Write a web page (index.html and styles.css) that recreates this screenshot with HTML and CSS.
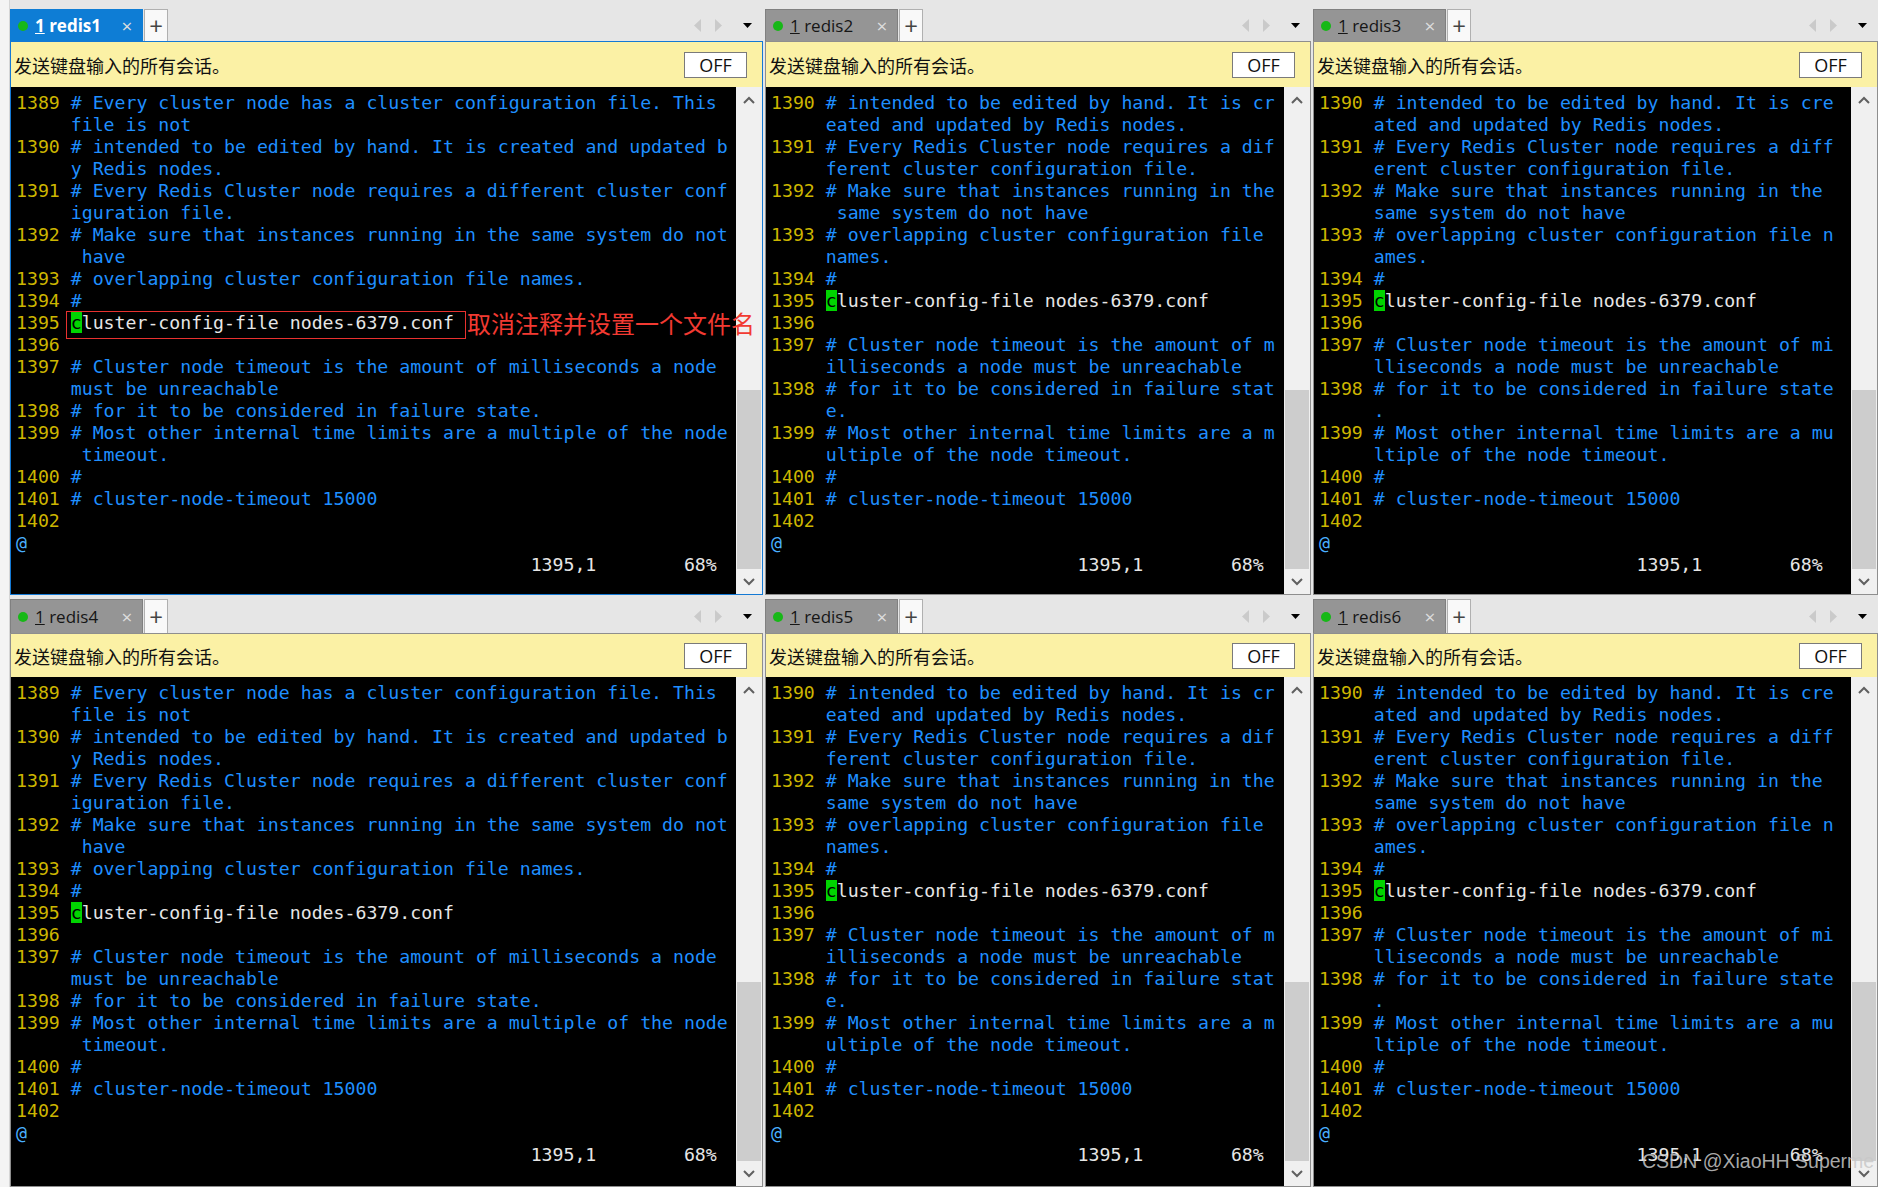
FILE: index.html
```
<!DOCTYPE html>
<html lang="zh-CN">
<head>
    <meta charset="UTF-8">
    <title>Xshell - redis</title>
    <link rel="stylesheet" href="styles.css">
</head>
<body>
<div class="screen">
    <div class="edge"></div>
    <div class="panes">

        <!-- redis1 (active) -->
        <div class="pane active">
            <div class="tabbar">
                <div class="tab"><span class="dot"></span><span class="tab-name"><u>1</u> redis1</span><span class="close">×</span></div>
                <div class="add">+</div>
                <div class="tab-nav">
                    <svg width="7" height="13" viewBox="0 0 7 13"><path d="M7 0 L0 6.5 L7 13 Z" fill="#cacaca"/></svg>
                    <svg width="7" height="13" viewBox="0 0 7 13"><path d="M0 0 L7 6.5 L0 13 Z" fill="#cacaca"/></svg>
                    <svg class="menu" width="9" height="5" viewBox="0 0 9 5"><path d="M0 0 L9 0 L4.5 5 Z" fill="#000"/></svg>
                </div>
            </div>
            <div class="frame">
                <div class="sendbar"><span>发送键盘输入的所有会话。</span><span class="off">OFF</span></div>
                <div class="term">
<pre class="lines"><span class="n">1389</span> # Every cluster node has a cluster configuration file. This
     file is not
<span class="n">1390</span> # intended to be edited by hand. It is created and updated b
     y Redis nodes.
<span class="n">1391</span> # Every Redis Cluster node requires a different cluster conf
     iguration file.
<span class="n">1392</span> # Make sure that instances running in the same system do not
      have
<span class="n">1393</span> # overlapping cluster configuration file names.
<span class="n">1394</span> #
<span class="n">1395</span> <span class="w"><span class="cur">c</span>luster-config-file nodes-6379.conf</span>
<span class="n">1396</span>
<span class="n">1397</span> # Cluster node timeout is the amount of milliseconds a node
     must be unreachable
<span class="n">1398</span> # for it to be considered in failure state.
<span class="n">1399</span> # Most other internal time limits are a multiple of the node
      timeout.
<span class="n">1400</span> #
<span class="n">1401</span> # cluster-node-timeout 15000
<span class="n">1402</span>
<span class="at">@</span>
<span class="st ruler-65">1395,1        68%</span></pre>
                    <div class="scroll">
                        <div class="arrow"><svg width="12" height="8" viewBox="0 0 12 8"><path d="M1 7 L6 2 L11 7" fill="none" stroke="#606060" stroke-width="2"/></svg></div>
                        <div class="track"></div>
                        <div class="thumb"></div>
                        <div class="arrow"><svg width="12" height="8" viewBox="0 0 12 8"><path d="M1 1 L6 6 L11 1" fill="none" stroke="#606060" stroke-width="2"/></svg></div>
                    </div>
                    <div class="note-box"></div>
                    <div class="note">取消注释并设置一个文件名</div>
                </div>
            </div>
        </div>

        <!-- redis2 -->
        <div class="pane">
            <div class="tabbar">
                <div class="tab"><span class="dot"></span><span class="tab-name"><u>1</u> redis2</span><span class="close">×</span></div>
                <div class="add">+</div>
                <div class="tab-nav">
                    <svg width="7" height="13" viewBox="0 0 7 13"><path d="M7 0 L0 6.5 L7 13 Z" fill="#cacaca"/></svg>
                    <svg width="7" height="13" viewBox="0 0 7 13"><path d="M0 0 L7 6.5 L0 13 Z" fill="#cacaca"/></svg>
                    <svg class="menu" width="9" height="5" viewBox="0 0 9 5"><path d="M0 0 L9 0 L4.5 5 Z" fill="#000"/></svg>
                </div>
            </div>
            <div class="frame">
                <div class="sendbar"><span>发送键盘输入的所有会话。</span><span class="off">OFF</span></div>
                <div class="term">
<pre class="lines"><span class="n">1390</span> # intended to be edited by hand. It is cr
     eated and updated by Redis nodes.
<span class="n">1391</span> # Every Redis Cluster node requires a dif
     ferent cluster configuration file.
<span class="n">1392</span> # Make sure that instances running in the
      same system do not have
<span class="n">1393</span> # overlapping cluster configuration file
     names.
<span class="n">1394</span> #
<span class="n">1395</span> <span class="w"><span class="cur">c</span>luster-config-file nodes-6379.conf</span>
<span class="n">1396</span>
<span class="n">1397</span> # Cluster node timeout is the amount of m
     illiseconds a node must be unreachable
<span class="n">1398</span> # for it to be considered in failure stat
     e.
<span class="n">1399</span> # Most other internal time limits are a m
     ultiple of the node timeout.
<span class="n">1400</span> #
<span class="n">1401</span> # cluster-node-timeout 15000
<span class="n">1402</span>
<span class="at">@</span>
<span class="st ruler-46">1395,1        68%</span></pre>
                    <div class="scroll">
                        <div class="arrow"><svg width="12" height="8" viewBox="0 0 12 8"><path d="M1 7 L6 2 L11 7" fill="none" stroke="#606060" stroke-width="2"/></svg></div>
                        <div class="track"></div>
                        <div class="thumb"></div>
                        <div class="arrow"><svg width="12" height="8" viewBox="0 0 12 8"><path d="M1 1 L6 6 L11 1" fill="none" stroke="#606060" stroke-width="2"/></svg></div>
                    </div>
                </div>
            </div>
        </div>

        <!-- redis3 -->
        <div class="pane">
            <div class="tabbar">
                <div class="tab"><span class="dot"></span><span class="tab-name"><u>1</u> redis3</span><span class="close">×</span></div>
                <div class="add">+</div>
                <div class="tab-nav">
                    <svg width="7" height="13" viewBox="0 0 7 13"><path d="M7 0 L0 6.5 L7 13 Z" fill="#cacaca"/></svg>
                    <svg width="7" height="13" viewBox="0 0 7 13"><path d="M0 0 L7 6.5 L0 13 Z" fill="#cacaca"/></svg>
                    <svg class="menu" width="9" height="5" viewBox="0 0 9 5"><path d="M0 0 L9 0 L4.5 5 Z" fill="#000"/></svg>
                </div>
            </div>
            <div class="frame">
                <div class="sendbar"><span>发送键盘输入的所有会话。</span><span class="off">OFF</span></div>
                <div class="term">
<pre class="lines"><span class="n">1390</span> # intended to be edited by hand. It is cre
     ated and updated by Redis nodes.
<span class="n">1391</span> # Every Redis Cluster node requires a diff
     erent cluster configuration file.
<span class="n">1392</span> # Make sure that instances running in the
     same system do not have
<span class="n">1393</span> # overlapping cluster configuration file n
     ames.
<span class="n">1394</span> #
<span class="n">1395</span> <span class="w"><span class="cur">c</span>luster-config-file nodes-6379.conf</span>
<span class="n">1396</span>
<span class="n">1397</span> # Cluster node timeout is the amount of mi
     lliseconds a node must be unreachable
<span class="n">1398</span> # for it to be considered in failure state
     .
<span class="n">1399</span> # Most other internal time limits are a mu
     ltiple of the node timeout.
<span class="n">1400</span> #
<span class="n">1401</span> # cluster-node-timeout 15000
<span class="n">1402</span>
<span class="at">@</span>
<span class="st ruler-47">1395,1        68%</span></pre>
                    <div class="scroll">
                        <div class="arrow"><svg width="12" height="8" viewBox="0 0 12 8"><path d="M1 7 L6 2 L11 7" fill="none" stroke="#606060" stroke-width="2"/></svg></div>
                        <div class="track"></div>
                        <div class="thumb"></div>
                        <div class="arrow"><svg width="12" height="8" viewBox="0 0 12 8"><path d="M1 1 L6 6 L11 1" fill="none" stroke="#606060" stroke-width="2"/></svg></div>
                    </div>
                </div>
            </div>
        </div>

        <!-- redis4 -->
        <div class="pane lower">
            <div class="tabbar">
                <div class="tab"><span class="dot"></span><span class="tab-name"><u>1</u> redis4</span><span class="close">×</span></div>
                <div class="add">+</div>
                <div class="tab-nav">
                    <svg width="7" height="13" viewBox="0 0 7 13"><path d="M7 0 L0 6.5 L7 13 Z" fill="#cacaca"/></svg>
                    <svg width="7" height="13" viewBox="0 0 7 13"><path d="M0 0 L7 6.5 L0 13 Z" fill="#cacaca"/></svg>
                    <svg class="menu" width="9" height="5" viewBox="0 0 9 5"><path d="M0 0 L9 0 L4.5 5 Z" fill="#000"/></svg>
                </div>
            </div>
            <div class="frame">
                <div class="sendbar"><span>发送键盘输入的所有会话。</span><span class="off">OFF</span></div>
                <div class="term">
<pre class="lines"><span class="n">1389</span> # Every cluster node has a cluster configuration file. This
     file is not
<span class="n">1390</span> # intended to be edited by hand. It is created and updated b
     y Redis nodes.
<span class="n">1391</span> # Every Redis Cluster node requires a different cluster conf
     iguration file.
<span class="n">1392</span> # Make sure that instances running in the same system do not
      have
<span class="n">1393</span> # overlapping cluster configuration file names.
<span class="n">1394</span> #
<span class="n">1395</span> <span class="w"><span class="cur">c</span>luster-config-file nodes-6379.conf</span>
<span class="n">1396</span>
<span class="n">1397</span> # Cluster node timeout is the amount of milliseconds a node
     must be unreachable
<span class="n">1398</span> # for it to be considered in failure state.
<span class="n">1399</span> # Most other internal time limits are a multiple of the node
      timeout.
<span class="n">1400</span> #
<span class="n">1401</span> # cluster-node-timeout 15000
<span class="n">1402</span>
<span class="at">@</span>
<span class="st ruler-65">1395,1        68%</span></pre>
                    <div class="scroll">
                        <div class="arrow"><svg width="12" height="8" viewBox="0 0 12 8"><path d="M1 7 L6 2 L11 7" fill="none" stroke="#606060" stroke-width="2"/></svg></div>
                        <div class="track"></div>
                        <div class="thumb"></div>
                        <div class="arrow"><svg width="12" height="8" viewBox="0 0 12 8"><path d="M1 1 L6 6 L11 1" fill="none" stroke="#606060" stroke-width="2"/></svg></div>
                    </div>
                </div>
            </div>
        </div>

        <!-- redis5 -->
        <div class="pane lower">
            <div class="tabbar">
                <div class="tab"><span class="dot"></span><span class="tab-name"><u>1</u> redis5</span><span class="close">×</span></div>
                <div class="add">+</div>
                <div class="tab-nav">
                    <svg width="7" height="13" viewBox="0 0 7 13"><path d="M7 0 L0 6.5 L7 13 Z" fill="#cacaca"/></svg>
                    <svg width="7" height="13" viewBox="0 0 7 13"><path d="M0 0 L7 6.5 L0 13 Z" fill="#cacaca"/></svg>
                    <svg class="menu" width="9" height="5" viewBox="0 0 9 5"><path d="M0 0 L9 0 L4.5 5 Z" fill="#000"/></svg>
                </div>
            </div>
            <div class="frame">
                <div class="sendbar"><span>发送键盘输入的所有会话。</span><span class="off">OFF</span></div>
                <div class="term">
<pre class="lines"><span class="n">1390</span> # intended to be edited by hand. It is cr
     eated and updated by Redis nodes.
<span class="n">1391</span> # Every Redis Cluster node requires a dif
     ferent cluster configuration file.
<span class="n">1392</span> # Make sure that instances running in the
     same system do not have
<span class="n">1393</span> # overlapping cluster configuration file
     names.
<span class="n">1394</span> #
<span class="n">1395</span> <span class="w"><span class="cur">c</span>luster-config-file nodes-6379.conf</span>
<span class="n">1396</span>
<span class="n">1397</span> # Cluster node timeout is the amount of m
     illiseconds a node must be unreachable
<span class="n">1398</span> # for it to be considered in failure stat
     e.
<span class="n">1399</span> # Most other internal time limits are a m
     ultiple of the node timeout.
<span class="n">1400</span> #
<span class="n">1401</span> # cluster-node-timeout 15000
<span class="n">1402</span>
<span class="at">@</span>
<span class="st ruler-46">1395,1        68%</span></pre>
                    <div class="scroll">
                        <div class="arrow"><svg width="12" height="8" viewBox="0 0 12 8"><path d="M1 7 L6 2 L11 7" fill="none" stroke="#606060" stroke-width="2"/></svg></div>
                        <div class="track"></div>
                        <div class="thumb"></div>
                        <div class="arrow"><svg width="12" height="8" viewBox="0 0 12 8"><path d="M1 1 L6 6 L11 1" fill="none" stroke="#606060" stroke-width="2"/></svg></div>
                    </div>
                </div>
            </div>
        </div>

        <!-- redis6 -->
        <div class="pane lower">
            <div class="tabbar">
                <div class="tab"><span class="dot"></span><span class="tab-name"><u>1</u> redis6</span><span class="close">×</span></div>
                <div class="add">+</div>
                <div class="tab-nav">
                    <svg width="7" height="13" viewBox="0 0 7 13"><path d="M7 0 L0 6.5 L7 13 Z" fill="#cacaca"/></svg>
                    <svg width="7" height="13" viewBox="0 0 7 13"><path d="M0 0 L7 6.5 L0 13 Z" fill="#cacaca"/></svg>
                    <svg class="menu" width="9" height="5" viewBox="0 0 9 5"><path d="M0 0 L9 0 L4.5 5 Z" fill="#000"/></svg>
                </div>
            </div>
            <div class="frame">
                <div class="sendbar"><span>发送键盘输入的所有会话。</span><span class="off">OFF</span></div>
                <div class="term">
<pre class="lines"><span class="n">1390</span> # intended to be edited by hand. It is cre
     ated and updated by Redis nodes.
<span class="n">1391</span> # Every Redis Cluster node requires a diff
     erent cluster configuration file.
<span class="n">1392</span> # Make sure that instances running in the
     same system do not have
<span class="n">1393</span> # overlapping cluster configuration file n
     ames.
<span class="n">1394</span> #
<span class="n">1395</span> <span class="w"><span class="cur">c</span>luster-config-file nodes-6379.conf</span>
<span class="n">1396</span>
<span class="n">1397</span> # Cluster node timeout is the amount of mi
     lliseconds a node must be unreachable
<span class="n">1398</span> # for it to be considered in failure state
     .
<span class="n">1399</span> # Most other internal time limits are a mu
     ltiple of the node timeout.
<span class="n">1400</span> #
<span class="n">1401</span> # cluster-node-timeout 15000
<span class="n">1402</span>
<span class="at">@</span>
<span class="st ruler-47">1395,1        68%</span></pre>
                    <div class="scroll">
                        <div class="arrow"><svg width="12" height="8" viewBox="0 0 12 8"><path d="M1 7 L6 2 L11 7" fill="none" stroke="#606060" stroke-width="2"/></svg></div>
                        <div class="track"></div>
                        <div class="thumb"></div>
                        <div class="arrow"><svg width="12" height="8" viewBox="0 0 12 8"><path d="M1 1 L6 6 L11 1" fill="none" stroke="#606060" stroke-width="2"/></svg></div>
                    </div>
                </div>
            </div>
        </div>

    </div>
</div>
<div class="watermark">CSDN @XiaoHH Superme</div>
</body>
</html>
```

FILE: styles.css
```
body {
    margin: 0;
    width: 1878px;
    height: 1187px;
    overflow: hidden;
    position: relative;
    background: #e6e6e6;
    font-family: "Open Sans", "Noto Sans", sans-serif;
}

.screen {
    display: flex;
    height: 1187px;
}

.edge {
    width: 9px;
    background: #f4f4f4;
    border-right: 1px solid #d6d6d6;
}

.panes {
    flex: 1;
    display: grid;
    grid-template-columns: 753px 546px 1fr;
    grid-template-rows: 595px 1fr;
    column-gap: 2px;
    row-gap: 2px;
}

.pane {
    display: flex;
    flex-direction: column;
    min-width: 0;
    min-height: 0;
}

/* tab strip */
.tabbar {
    height: 41px;
    padding-top: 9px;
    box-sizing: border-box;
    display: flex;
    align-items: stretch;
    flex-shrink: 0;
}
.pane.lower .tabbar {
    height: 36px;
    padding-top: 2px;
}

.tab {
    width: 133px;
    box-sizing: border-box;
    display: flex;
    align-items: center;
    padding-left: 7px;
    background: #959595;
    border: 1px solid #808080;
    border-bottom: none;
    color: #161616;
    font-size: 17px;
}
.pane.active .tab {
    background: #0e7dd5;
    border-color: #0e7dd5;
    color: #fff;
    font-weight: bold;
}

.dot {
    width: 10px;
    height: 10px;
    border-radius: 50%;
    background: #17b817;
    margin-right: 7px;
}

.tab-name {
    flex: 1;
    white-space: nowrap;
}

.close {
    width: 20px;
    margin-right: 5px;
    text-align: center;
    color: #dddddd;
    font-size: 19px;
    font-weight: normal;
}

.add {
    width: 24px;
    margin-left: 1px;
    box-sizing: border-box;
    background: #f9f9f9;
    border: 1px solid #b0b0b0;
    border-bottom: none;
    display: flex;
    align-items: center;
    justify-content: center;
    font-size: 24px;
    color: #444;
    line-height: 1;
}

.tab-nav {
    margin-left: auto;
    display: flex;
    align-items: center;
    padding-right: 11px;
}
.tab-nav svg {
    margin-left: 14px;
}
.tab-nav .menu {
    margin-left: 21px;
}

/* pane body */
.frame {
    flex: 1;
    min-height: 0;
    display: flex;
    flex-direction: column;
    border: 1px solid #8e8e8e;
}
.pane.active .frame {
    border-color: #1479d4;
}

.sendbar {
    height: 45px;
    flex-shrink: 0;
    display: flex;
    align-items: center;
    justify-content: space-between;
    padding: 0 15px 0 3px;
    background: #fbf1a5;
    font-family: "Noto Sans CJK SC", sans-serif;
    font-size: 18px;
    color: #111;
}
.pane.lower .sendbar {
    height: 43px;
}

.off {
    width: 63px;
    height: 26px;
    box-sizing: border-box;
    border: 1px solid #7a7a7a;
    background: #fff;
    display: flex;
    align-items: center;
    justify-content: center;
    font-family: "Open Sans", sans-serif;
    font-size: 18px;
    color: #111;
}

/* terminal */
.term {
    flex: 1;
    min-height: 0;
    display: flex;
    background: #000;
    position: relative;
}

.lines {
    flex: 1;
    min-width: 0;
    margin: 0;
    padding: 5px 0 0 5px;
    overflow: hidden;
    white-space: pre;
    font-family: "DejaVu Sans Mono", monospace;
    font-size: 18.2px;
    line-height: 22px;
    color: #1f8fff;
}

.n { color: #cdb600; }
.w { color: #e6e6e6; }
.at { color: #4ab0ff; }
.st { color: #e6e6e6; }

.cur {
    background: #00d400;
    color: #000;
}

.ruler-65 { margin-left: 47ch; }
.ruler-46 { margin-left: 28ch; }
.ruler-47 { margin-left: 29ch; }

.scroll {
    width: 26px;
    flex-shrink: 0;
    background: #f0f0f0;
    display: flex;
    flex-direction: column;
}
.arrow {
    height: 25px;
    display: flex;
    align-items: center;
    justify-content: center;
}
.track {
    flex: 1;
}
.thumb {
    height: 179px;
    margin: 0 1px;
    background: #cdcdcd;
}

/* red annotation over redis1 */
.note-box {
    position: absolute;
    left: 55px;
    top: 224px;
    width: 400px;
    height: 28px;
    box-sizing: border-box;
    border: 1px solid #e8312f;
}
.note {
    position: absolute;
    left: 456px;
    top: 220px;
    line-height: 32px;
    font-family: "Noto Sans CJK SC", sans-serif;
    font-size: 24px;
    color: #f23a32;
    white-space: nowrap;
}

.watermark {
    position: absolute;
    left: 1642px;
    top: 1150px;
    font-family: "Liberation Sans", Arial, sans-serif;
    font-size: 19.5px;
    color: rgba(200, 200, 200, 0.85);
    white-space: nowrap;
}
```
